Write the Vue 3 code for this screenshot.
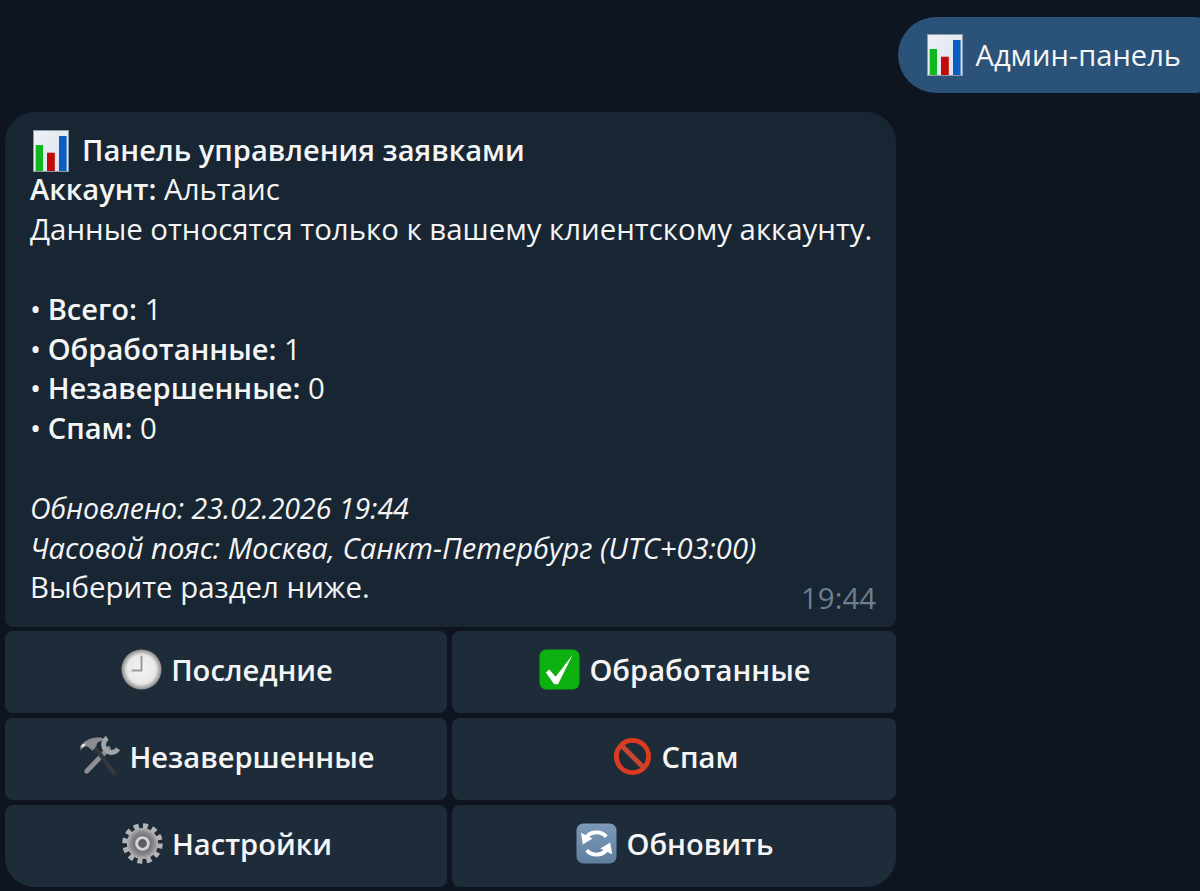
<template>
  <div class="chat">
    <div class="out-row">
      <div class="out-bubble">
        <svg class="emoji chart" viewBox="0 0 36 42"><use href="#chart-icon" /></svg>
        <span>Админ-панель</span>
      </div>
    </div>

    <div class="message">
      <div class="bubble">
        <div class="line head">
          <svg class="emoji chart" viewBox="0 0 36 42">
            <defs>
              <linearGradient id="chart-bg" x1="0" y1="0" x2="1" y2="1">
                <stop offset="0%" stop-color="#eef2f7" />
                <stop offset="100%" stop-color="#d9e1ea" />
              </linearGradient>
              <g id="chart-icon">
                <rect x="0.5" y="0.5" width="35" height="41" fill="url(#chart-bg)" stroke="#8f9aa6" />
                <rect x="2.7" y="15" width="7.3" height="26" fill="#0fb81f" />
                <rect x="14" y="22.7" width="7.8" height="18.3" fill="#c30a0a" />
                <rect x="26" y="6" width="7.6" height="35" fill="#0b5cc4" />
              </g>
            </defs>
            <use href="#chart-icon" />
          </svg>
          <b>Панель управления заявками</b>
        </div>
        <div class="line"><b>Аккаунт:</b> Альтаис</div>
        <div class="line">Данные относятся только к вашему клиентскому аккаунту.</div>
        <div class="line"></div>
        <div v-for="s in stats" :key="s.label" class="line stat">• <b>{{ s.label }}:</b> {{ s.value }}</div>
        <div class="line"></div>
        <div class="line"><i class="date">Обновлено: 23.02.2026 19:44</i></div>
        <div class="line"><i>Часовой пояс: Москва, Санкт-Петербург (UTC+03:00)</i></div>
        <div class="line">Выберите раздел ниже.</div>
        <span class="time">19:44</span>
      </div>

      <div class="buttons">
        <button class="btn">
          <svg class="emoji" viewBox="0 0 42 42">
            <defs>
              <radialGradient id="clock-face" cx="50%" cy="50%" r="50%">
                <stop offset="0%" stop-color="#f4f4f4" />
                <stop offset="72%" stop-color="#e8e8e8" />
                <stop offset="100%" stop-color="#8a8a8a" />
              </radialGradient>
            </defs>
            <circle cx="21" cy="21" r="20.5" fill="url(#clock-face)" />
            <path d="M21 7v15H11" fill="none" stroke="#9a9a9a" stroke-width="2" />
          </svg>
          Последние
        </button>
        <button class="btn">
          <svg class="emoji" viewBox="0 0 42 42">
            <rect x="0.5" y="0.5" width="41" height="41" rx="7" fill="#0cb00f" />
            <path d="M7 24l3.5-3 6.5 7.5L34.5 6 19.5 36h-4z" fill="#fff" />
          </svg>
          Обработанные
        </button>
        <button class="btn">
          <svg class="emoji" viewBox="0 0 42 42">
            <path d="M30 13L8 36" stroke="#8e9094" stroke-width="5" stroke-linecap="round" />
            <path d="M29 2A8 8 0 1 0 40 13" fill="none" stroke="#a3a5a8" stroke-width="5" />
            <path d="M15 10l21 28" stroke="#35383c" stroke-width="4.5" stroke-linecap="round" />
            <path d="M1 11C6 4 14 0 24 2l1 3c-5 0-7 2-7 5l-4 5-5-4c-3-1-6 1-7 4z" fill="#8a8c90" />
            <path d="M2 10c2-2 4-2 5-2l-3 4z" fill="#ececec" />
          </svg>
          Незавершенные
        </button>
        <button class="btn">
          <svg class="emoji" viewBox="0 0 42 42">
            <circle cx="21" cy="21" r="16.5" fill="none" stroke="#dd3a20" stroke-width="5" />
            <path d="M9 9l24 24" stroke="#c9452f" stroke-width="5" />
          </svg>
          Спам
        </button>
        <button class="btn">
          <svg class="emoji" viewBox="0 0 42 42">
            <defs>
              <radialGradient id="gear-body" cx="50%" cy="50%" r="50%">
                <stop offset="35%" stop-color="#6a6a6c" />
                <stop offset="70%" stop-color="#858587" />
                <stop offset="100%" stop-color="#b4b4b6" />
              </radialGradient>
            </defs>
            <circle cx="21" cy="21" r="18" fill="none" stroke="#b4b4b6" stroke-width="5.5" stroke-dasharray="5 4.42" />
            <circle cx="21" cy="21" r="16" fill="url(#gear-body)" />
            <circle cx="21" cy="21" r="6" fill="#5a5d61" stroke="#d2d2d4" stroke-width="3" />
          </svg>
          Настройки
        </button>
        <button class="btn">
          <svg class="emoji" viewBox="0 0 42 42">
            <defs>
              <linearGradient id="refresh-bg" x1="0" y1="0" x2="0" y2="1">
                <stop offset="0%" stop-color="#7d9ab8" />
                <stop offset="100%" stop-color="#5f7f9f" />
              </linearGradient>
            </defs>
            <rect x="0.5" y="0.5" width="41" height="41" rx="7" fill="url(#refresh-bg)" />
            <path d="M10 16c3-7 15-9 21-2" fill="none" stroke="#fff" stroke-width="4" />
            <path d="M5 10l2 12 10-6z" fill="#fff" />
            <path d="M32 26c-3 7-15 9-21 2" fill="none" stroke="#fff" stroke-width="4" />
            <path d="M37 32l-2-12-10 6z" fill="#fff" />
          </svg>
          Обновить
        </button>
      </div>
    </div>
  </div>
</template>

<script setup>
const stats = [
  { label: 'Всего', value: 1 },
  { label: 'Обработанные', value: 1 },
  { label: 'Незавершенные', value: 0 },
  { label: 'Спам', value: 0 },
]
</script>

<style>
html, body {
  background: #0e1621;
  overflow: hidden;
}
</style>

<style scoped>
.chat {
  height: 891px;
  box-sizing: border-box;
  padding-top: 17px;
  background: #0e1520;
  color: #f5f5f5;
  font-family: "Open Sans", "Noto Sans", sans-serif;
  font-size: 29.4px;
  overflow: hidden;
}

.out-row {
  display: flex;
  justify-content: flex-end;
}

.out-bubble {
  display: flex;
  align-items: center;
  gap: 13px;
  height: 76px;
  margin-right: -30px;
  padding: 0 49px 0 29px;
  border-radius: 38px;
  background: #2b5278;
  font-size: 29.1px;
}

.message {
  width: 891px;
  margin: 19px 0 0 5px;
}

.bubble {
  position: relative;
  padding: 18.7px 25px 18.7px;
  border-radius: 30px 30px 8px 8px;
  background: #182533;
}

.line {
  height: 39.8px;
  line-height: 39.8px;
  white-space: nowrap;
}

.line b {
  font-size: 29.1px;
  font-weight: 600;
}

.stat b {
  margin-left: -1px;
}

.line i {
  font-size: 29.15px;
}

.line .date {
  font-size: 28.5px;
}

.head {
  display: flex;
  align-items: center;
  gap: 13px;
}

.head .emoji {
  margin-left: 3px;
}

.emoji {
  flex: none;
  width: 41px;
  height: 41px;
}

.chart {
  width: 36px;
  height: 42px;
}

.time {
  position: absolute;
  right: 20px;
  bottom: 9px;
  color: #6d7f8f;
}

.buttons {
  display: grid;
  grid-template-columns: 442px 444px;
  gap: 5px;
  margin-top: 4px;
}

.btn {
  display: flex;
  align-items: center;
  justify-content: center;
  gap: 9px;
  height: 82px;
  padding: 0 0 4px 2px;
  border: none;
  border-radius: 8px;
  background: #1e2c3a;
  color: #f5f5f5;
  font-family: inherit;
  font-size: 29.15px;
  font-weight: 600;
}

.btn:nth-last-child(2) {
  border-bottom-left-radius: 30px;
}

.btn:last-child {
  border-bottom-right-radius: 30px;
}
</style>
